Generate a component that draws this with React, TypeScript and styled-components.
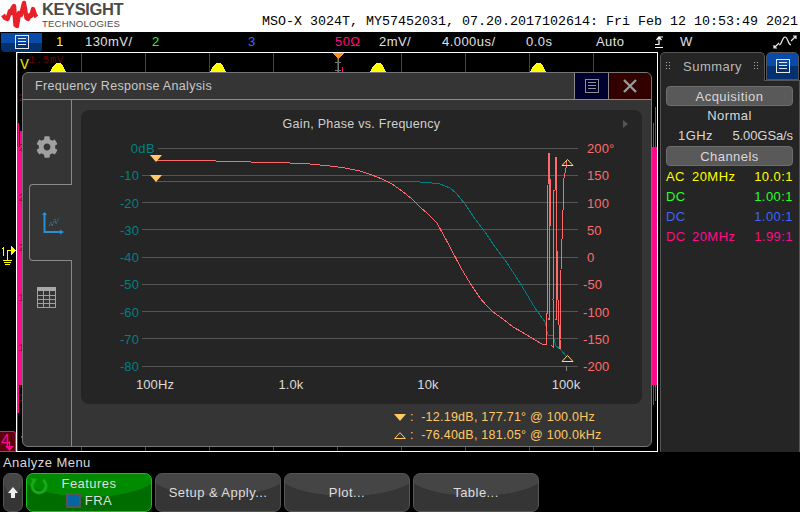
import React from "react";
import styled, { createGlobalStyle } from "styled-components";
import { FaCog } from "react-icons/fa";

const Global = createGlobalStyle`
  html, body { margin: 0; padding: 0; background: #000; }
  body { font-family: "Liberation Sans", Arial, sans-serif; }
  * { box-sizing: border-box; }
`;

const Page = styled.div`
  width: 800px; height: 512px; overflow: hidden; display: flex; flex-direction: column;
  background: #000; color: #dedede; font-size: 13px; letter-spacing: .45px;
`;
const Header = styled.header`
  height: 32px; background: #fff; display: flex; align-items: flex-start; justify-content: space-between;
  flex: none;
`;
const Logo = styled.div`display: flex; align-items: flex-start; padding-left: 1px;`;
const LogoText = styled.div`
  margin-left: 4px; color: #4b4b4b; display: flex; flex-direction: column;
`;
const LogoName = styled.span`
  font-size: 16.5px; font-weight: 700; line-height: 17px; margin-top: 1px; letter-spacing: -.4px;
`;
const LogoSub = styled.span`font-size: 9.6px; line-height: 10px; letter-spacing: .15px; margin-top: 1px;`;
const ScopeTitle = styled.div`
  font-family: "Liberation Mono", monospace; font-size: 13.33px; letter-spacing: 0; color: #000;
  line-height: 16px; padding: 14px 2px 0 0; white-space: pre;
`;
const StatusBar = styled.div`height: 20px; flex: none; display: flex; align-items: center;`;
const MenuKey = styled.div`
  width: 41px; height: 19px; margin-left: 1px; border-radius: 0 0 4px 4px;
  background: linear-gradient(#0a4aa8 0 50%, #03306f 50% 100%);
  display: flex; align-items: center; justify-content: center; flex: none;
`;
const Cell = styled.div<{ $w: number; $c?: string }>`
  width: ${(p) => p.$w}px; flex: none; color: ${(p) => p.$c || "#e0e0e0"}; white-space: nowrap; line-height: 20px;
`;
const Middle = styled.div`flex: none; height: 400px; display: flex;`;
const Gutter = styled.div`
  width: 16px; flex: none; display: flex; flex-direction: column; justify-content: flex-end; position: relative;
`;
const ChannelOne = styled.svg`position: absolute; left: 0; top: 193px;`;
const ChannelFour = styled.div`
  height: 21px; width: 16px; background: #5c0010; border: 1px solid #ff0a8c; border-left: 0;
  border-radius: 0 3px 0 0; color: #ff0a8c; font-size: 16px; line-height: 17px; padding-left: 1px; position: relative;
`;
const Scope = styled.div`
  width: 642px; flex: none; border: 1px solid #fff; position: relative; overflow: hidden; background: #000;
  background-image: repeating-linear-gradient(90deg, transparent 0 63px, #444 63px 64px);
  background-position: 1px 0;
`;
const Trace = styled.svg`position: absolute; left: -17px; top: -53px;`;
const Dialog = styled.section`
  position: absolute; left: 5px; top: 19px; width: 630px; height: 375px;
  background: #353535; border: 1px solid #777; border-radius: 6px;
  display: flex; flex-direction: column; overflow: hidden;
`;
const TitleBar = styled.div`
  height: 27px; flex: none; display: flex; align-items: stretch; border-bottom: 1px solid #8a8a8a;
`;
const DialogTitle = styled.div`
  flex: 1; padding-left: 12px; line-height: 27px; color: #c8c8c8; font-size: 12.5px; letter-spacing: .33px;
`;
const TitleButton = styled.div<{ $bg: string; $w: number }>`
  width: ${(p) => p.$w}px; background: ${(p) => p.$bg}; border-left: 1px solid #8a8a8a;
  display: flex; align-items: center; justify-content: center;
`;
const DialogBody = styled.div`flex: 1; display: flex; min-height: 0;`;
const Rail = styled.div`width: 49px; flex: none; display: flex; flex-direction: column;`;
const RailTab = styled.div<{ $h?: number; $active?: boolean; $top?: number }>`
  display: flex; justify-content: center;
  align-items: ${(p) => (p.$top ? "flex-start" : "center")};
  padding-top: ${(p) => p.$top || 0}px;
  ${(p) => (p.$h ? `height: ${p.$h}px; flex: none;` : "flex: 1;")}
  ${(p) =>
    p.$active
      ? "margin-left: 6px; border: 1px solid #8a8a8a; border-right: 0; border-radius: 4px 0 0 4px;"
      : "border-right: 1px solid #8a8a8a;"}
`;
const Content = styled.div`flex: 1; padding: 10px 9px 0 9px; display: flex; flex-direction: column;`;
const PlotPanel = styled.div`
  height: 294px; flex: none; background: #252525; border-radius: 8px; position: relative;
`;
const PlotHead = styled.div`
  text-align: center; color: #d0d0d0; font-size: 12.5px; letter-spacing: .28px; line-height: 28px;
`;
const PlotArrow = styled.span`
  position: absolute; right: 14px; top: 10px; width: 0; height: 0;
  border-left: 5px solid #555; border-top: 4px solid transparent; border-bottom: 4px solid transparent;
`;
const PlotSvg = styled.svg`position: absolute; left: 0; top: 0; letter-spacing: .1px;`;
const Readouts = styled.div`padding: 4px 0 0 313px; display: flex; flex-direction: column;`;
const Readout = styled.div`
  height: 18px; display: flex; align-items: center; color: #ffc864; font-size: 12.5px; letter-spacing: .25px; white-space: pre;
`;
const ReadoutMark = styled.svg`margin-right: 4px; flex: none;`;
const Side = styled.aside`
  width: 140px; flex: none; margin-left: 2px; display: flex; flex-direction: column;
`;
const SideTabs = styled.div`height: 28px; flex: none; display: flex; align-items: stretch; justify-content: space-between;`;
const SummaryTab = styled.div`
  width: 105px; background: #252525; border: 1px solid #555; border-bottom: 0; border-radius: 5px 5px 0 0;
  display: flex; align-items: center; justify-content: space-between; padding: 0 5px 2px 5px; color: #b9b9b9; margin-bottom: -1px; position: relative;
`;
const BlueTab = styled.div`
  width: 33px; margin-right: 1px; border-radius: 5px 5px 0 0; border: 1px solid #555;
  background: linear-gradient(#0a4aa8 0 50%, #03306f 50% 100%);
  display: flex; align-items: center; justify-content: center;
`;
const SideBody = styled.div`
  flex: 1; background: #252525; border: 1px solid #555; border-bottom: 0; padding: 5px 6px 0 5px;
  display: flex; flex-direction: column; align-items: stretch;
`;
const SideHead = styled.div`
  height: 20px; background: #595959; border: 1px solid #6d6d6d; border-radius: 4px; text-align: center;
  line-height: 20px; color: #d8d8d8;
`;
const SideLine = styled.div<{ $center?: boolean }>`
  height: 20px; line-height: 20px; display: flex; color: #d8d8d8;
  justify-content: ${(p) => (p.$center ? "center" : "space-between")};
  padding-left: ${(p) => (p.$center ? 0 : 12)}px;
`;
const Rate = styled.span`letter-spacing: -.1px;`;
const ChannelRow = styled.div<{ $c: string }>`
  height: 20px; line-height: 22px; display: flex; color: ${(p) => p.$c};
`;
const Coupling = styled.span`width: 26px; flex: none;`;
const Limit = styled.span`flex: 1;`;
const Footer = styled.footer`flex: 1; display: flex; flex-direction: column;`;
const MenuName = styled.div`height: 21px; line-height: 21px; padding-left: 3px; color: #d8d8d8; flex: none;`;
const Keys = styled.div`display: flex; gap: 3px; padding-left: 3px; height: 39px;`;
const SoftKey = styled.div`
  width: 126px; height: 39px; border-radius: 7px; border: 1px solid #555; color: #dedede;
  background: radial-gradient(ellipse 56% 22px at 50% 0, #454545 98%, #353535 100%);
  display: flex; align-items: center; justify-content: center;
`;
const UpKey = styled(SoftKey)`width: 20px;`;
const FeatureKey = styled(SoftKey)`
  border-color: #19c419; background: radial-gradient(ellipse 56% 23px at 50% 0, #008a00 98%, #006c00 100%);
  flex-direction: column; position: relative; line-height: 17px; padding-bottom: 2px;
`;
const Recycle = styled.svg`position: absolute; left: 2px; top: 2px;`;
const FeatureLine = styled.div`display: flex; align-items: center; gap: 4px;`;
const Check = styled.span`
  width: 15px; height: 15px; background: #0664a0; border: 2px solid #555; display: block;
`;

const coral = "155,160 215,160 216,161 250,161 251,162 290,163 310,164 330,166 345,168 360,171 372,175 382,179 392,184 402,191 412,199 420,207 428,214 437,223 450,247 461,268 470,283 480,298 486,305 493,312 503,319 513,327 522,332 530,337 542,344 546,344 546,313 547,313 547,248 548,185 549,153 549,320 550,178 551,226 551,345 553,347 553,300 554,190 555,190 556,157 556,320 557,250 558,300 560,349 560,340 561,270 563,210 564,178 566,168 567,161";
const teal = "155,181 405,181 420,182 432,183 440,184 450,188 456,193 465,204 475,219 485,232 495,247 505,260 520,283 535,308 545,322 548,335 553,336 556,346 560,349 567,357";
const bump = (x: number) => `${x - 8},72 ${x - 5},66 ${x - 2},63 ${x + 2},63 ${x + 5},66 ${x + 8},72`;

const MenuGlyph = ({ c = "#e6e6e6" }: { c?: string }) => (
  <svg width="14" height="14" viewBox="0 0 14 14" shapeRendering="crispEdges">
    <rect x=".5" y=".5" width="13" height="13" fill="none" stroke={c} />
    <path d="M3 3.5h8M3 6.5h8M3 9.5h8" stroke={c} />
  </svg>
);
const Grip = () => (
  <svg width="5" height="8" viewBox="0 0 5 8" fill="#aaa" shapeRendering="crispEdges">
    <path d="M0 0h1v1H0zM3 0h1v1H3zM0 3h1v1H0zM3 3h1v1H3zM0 6h1v1H0zM3 6h1v1H3z" />
  </svg>
);

export default function App() {
  const left = ["-10", "-20", "-30", "-40", "-50", "-60", "-70", "-80"];
  const right = ["200°", "150", "100", "50", "0", "-50", "-100", "-150", "-200"];
  const dy = 27.25;
  return (
    <Page>
      <Global />
      <Header>
        <Logo>
          <svg width="37" height="30" viewBox="0 0 37 30">
            <polyline
              points="2,15 4,18 6.500,19 9,11 10.500,13 11.500,8 13,6 14.500,25 16,26 18,13 20,15 23,3 25.500,18 27,19 29,15 30,16 32,9 34,15 35.500,17"
              fill="none" stroke="#e8202a" strokeWidth="4.400" strokeLinejoin="round"
            />
          </svg>
          <LogoText>
            <LogoName>KEYSIGHT</LogoName>
            <LogoSub>TECHNOLOGIES</LogoSub>
          </LogoText>
        </Logo>
        <ScopeTitle>MSO-X 3024T, MY57452031, 07.20.2017102614: Fri Feb 12 10:53:49 2021</ScopeTitle>
      </Header>
      <StatusBar>
        <MenuKey><MenuGlyph /></MenuKey>
        <Cell $w={14} />
        <Cell $w={29} $c="#ffff00">1</Cell>
        <Cell $w={67}>130mV/</Cell>
        <Cell $w={96} $c="#22ff22">2</Cell>
        <Cell $w={87} $c="#3c64ff">3</Cell>
        <Cell $w={44} $c="#ff0a8c">50Ω</Cell>
        <Cell $w={63}>2mV/</Cell>
        <Cell $w={84}>4.000us/</Cell>
        <Cell $w={70}>0.0s</Cell>
        <Cell $w={53}>Auto</Cell>
        <Cell $w={31}>
          <svg width="15" height="14" viewBox="0 0 15 14" fill="none" stroke="#fff" strokeWidth="1.200" style={{ display: "block" }}>
            <path d="M6 9.500h4V2h4M7.500 5L10 2l2.500 3M6 12.500h8" />
          </svg>
        </Cell>
        <Cell $w={93}>W</Cell>
        <svg width="24" height="16" viewBox="0 0 24 16" fill="none" stroke="#eee" strokeWidth="1.2">
          <path d="M1 14l5-5M1 11v3h3M6 11c3 0 3-8 6-8s3 8 6 8M18 7l5-5M20 2h3v3" />
        </svg>
      </StatusBar>
      <Middle>
        <Gutter>
          <ChannelOne width="16" height="22" viewBox="0 0 16 22" fill="none" shapeRendering="crispEdges">
            <path d="M3.500 2v9M2 3h1M7.500 15V5.500H11" stroke="#ffff00" />
            <path d="M11 1l5 4.500-5 4.500z" fill="#ffff00" />
            <path d="M3 15.500h9M4 17.500h7M5 19.500h5" stroke="#ffff00" />
          </ChannelOne>
          <ChannelFour>
            4
            <svg width="9" height="10" viewBox="0 0 9 10" style={{ position: "absolute", right: 1, bottom: 0 }} fill="#ff0a8c">
              <path d="M4 0h1v5H4zM0 5h9L4.500 10z" />
            </svg>
          </ChannelFour>
        </Gutter>
        <Scope>
          <Trace width="660" height="460" viewBox="0 0 660 460" shapeRendering="crispEdges">
            {[58, 218, 378, 538].map((x) => (
              <polygon key={x} points={bump(x)} fill="#ffff00" />
            ))}
            <path d="M332 53h12l-6 6z" fill="#f7941d" />
            <path d="M338 59v14M335 62h6M335 70h6" stroke="#777" fill="none" />
            <path d="M342.500 67v6" stroke="#ff0a8c" />
            <text x="20" y="69" fontSize="15" fill="#e6e600" fontFamily="Liberation Mono">V</text>
            <text x="29" y="63" fontSize="10" fill="#6a0000" fontFamily="Liberation Mono" letterSpacing="1">1.5mV</text>
            <path d="M17 147h5v238h-5zM18 123h1v24h-1zM20 131h2v16h-2zM17 385h2v28h-2zM21 436h1v2h-1z" fill="#ff0a8c" />
            <path d="M652 147h5v238h-5zM655 107h1v40h-1zM653 123h1v24h-1zM653 385h1v20h-1zM655 385h1v16h-1z" fill="#ff0a8c" />
            {[97, 147, 197, 247, 297, 347, 397].map((y, i) => (
              <text key={y} x="18.500" y={y + 4} fontSize="10" fill="#7a0030" fontFamily="Liberation Mono">{i > 3 ? "1" : "2"}</text>
            ))}
          </Trace>
          <Dialog>
            <TitleBar>
              <DialogTitle>Frequency Response Analysis</DialogTitle>
              <TitleButton $bg="#00002e" $w={34}><MenuGlyph c="#8f8f8f" /></TitleButton>
              <TitleButton $bg="#330000" $w={43}>
                <svg width="14" height="14" viewBox="0 0 14 14" stroke="#9a9a9a" strokeWidth="2.400">
                  <path d="M1 1l12 12M13 1L1 13" />
                </svg>
              </TitleButton>
            </TitleBar>
            <DialogBody>
              <Rail>
                <RailTab $h={84} $top={36}><FaCog size={22} color="#a0a0a0" /></RailTab>
                <RailTab $h={77} $active>
                  <svg width="22" height="24" viewBox="0 0 22 24" fill="none" style={{ marginLeft: 4 }}>
                    <path d="M2.500 2v19H20" stroke="#2e8fd0" strokeWidth="2" />
                    <path d="M0 4l2.500-3L5 4zM18 18.500l4 2.500-4 2.500z" fill="#2e8fd0" />
                    <path d="M7 15l2-4 1 4 3-7 1 5 3-6" stroke="#2e8fd0" strokeWidth=".7" strokeDasharray="2 1" />
                  </svg>
                </RailTab>
                <RailTab $top={26}>
                  <svg width="20" height="21" viewBox="0 0 20 21" fill="none" shapeRendering="crispEdges">
                    <rect x="0" y="0" width="19" height="4" fill="#a8a8a8" />
                    <path d="M.5 4v16.500h18V4M.5 8.500h18M.5 12.500h18M.5 16.500h18M6.500 4v16M12.500 4v16" stroke="#a0a0a0" />
                  </svg>
                </RailTab>
              </Rail>
              <Content>
                <PlotPanel>
                  <PlotHead>Gain, Phase vs. Frequency</PlotHead>
                  <PlotArrow />
                  <PlotSvg width="561" height="294" viewBox="81 110 561 294" fontFamily="Liberation Sans" fontSize="13">
                    <g shapeRendering="crispEdges" stroke="#555">
                      <path d="M158 148.500H578" />
                      {left.map((_, i) => (
                        <path key={i} d={`M142 ${Math.floor(148 + dy * (i + 1)) + 0.5}H578`} />
                      ))}
                      <path d="M566.500 366v5" stroke="#888" />
                    </g>
                    <text x="155" y="153" textAnchor="end" fill="#008080" letterSpacing=".4">0dB</text>
                    {left.map((t, i) => (
                      <text key={t} x="139" y={153 + dy * (i + 1)} textAnchor="end" fill="#008080">{t}</text>
                    ))}
                    {right.map((t, i) => (
                      <text key={t} x={t.startsWith("-") ? 583 : 587} y={153 + dy * i} fill="#ff6b6b">{t}</text>
                    ))}
                    {[["100Hz", 155], ["1.0k", 291], ["10k", 428], ["100k", 566]].map(([t, x]) => (
                      <text key={t} x={x} y="389" textAnchor="middle" fill="#dcdcdc">{t}</text>
                    ))}
                    <g fill="none" shapeRendering="crispEdges" strokeWidth="1">
                      <polyline points={teal} stroke="#008080" />
                      <polyline points={coral} stroke="#ff6b6b" />
                    </g>
                    <path d="M150 155h12l-6 7zM150 175h12l-6 7z" fill="#ffc864" />
                    <path d="M562 165.500h11l-5.500-6zM562 361.500h11l-5.500-6z" fill="none" stroke="#ffd890" />
                  </PlotSvg>
                </PlotPanel>
                <Readouts>
                  <Readout>
                    <ReadoutMark width="12" height="7" viewBox="0 0 12 7"><path d="M0 0h12L6 7z" fill="#ffc864" /></ReadoutMark>
                    <span>:  -12.19dB, 177.71° @ 100.0Hz</span>
                  </Readout>
                  <Readout>
                    <ReadoutMark width="12" height="7" viewBox="0 0 12 7"><path d="M.7 6.500h10.600L6 .7z" fill="none" stroke="#ffc864" /></ReadoutMark>
                    <span>:  -76.40dB, 181.05° @ 100.0kHz</span>
                  </Readout>
                </Readouts>
              </Content>
            </DialogBody>
          </Dialog>
        </Scope>
        <Side>
          <SideTabs>
            <SummaryTab><Grip /><span>Summary</span><Grip /></SummaryTab>
            <BlueTab><MenuGlyph /></BlueTab>
          </SideTabs>
          <SideBody>
            <SideHead>Acquisition</SideHead>
            <SideLine $center>Normal</SideLine>
            <SideLine><span>1GHz</span><Rate>5.00GSa/s</Rate></SideLine>
            <SideHead>Channels</SideHead>
            <ChannelRow $c="#ffff00"><Coupling>AC</Coupling><Limit>20MHz</Limit><span>10.0:1</span></ChannelRow>
            <ChannelRow $c="#22ff22"><Coupling>DC</Coupling><Limit /><span>1.00:1</span></ChannelRow>
            <ChannelRow $c="#3c64ff"><Coupling>DC</Coupling><Limit /><span>1.00:1</span></ChannelRow>
            <ChannelRow $c="#ff0a8c"><Coupling>DC</Coupling><Limit>20MHz</Limit><span>1.99:1</span></ChannelRow>
          </SideBody>
        </Side>
      </Middle>
      <Footer>
        <MenuName>Analyze Menu</MenuName>
        <Keys>
          <UpKey>
            <svg width="10" height="11" viewBox="0 0 10 11" fill="#eee"><path d="M5 0l5 6H7v5H3V6H0z" /></svg>
          </UpKey>
          <FeatureKey>
            <Recycle width="20" height="20" viewBox="0 0 20 20" fill="none" stroke="#19a819" strokeWidth="3">
              <path d="M14 4a7 7 0 1 1-9 1" />
              <path d="M2 2l6 1-3 5z" fill="#19a819" stroke="none" />
            </Recycle>
            <span>Features</span>
            <FeatureLine><Check /><span>FRA</span></FeatureLine>
          </FeatureKey>
          <SoftKey>Setup &amp; Apply...</SoftKey>
          <SoftKey>Plot...</SoftKey>
          <SoftKey>Table...</SoftKey>
        </Keys>
      </Footer>
    </Page>
  );
}
